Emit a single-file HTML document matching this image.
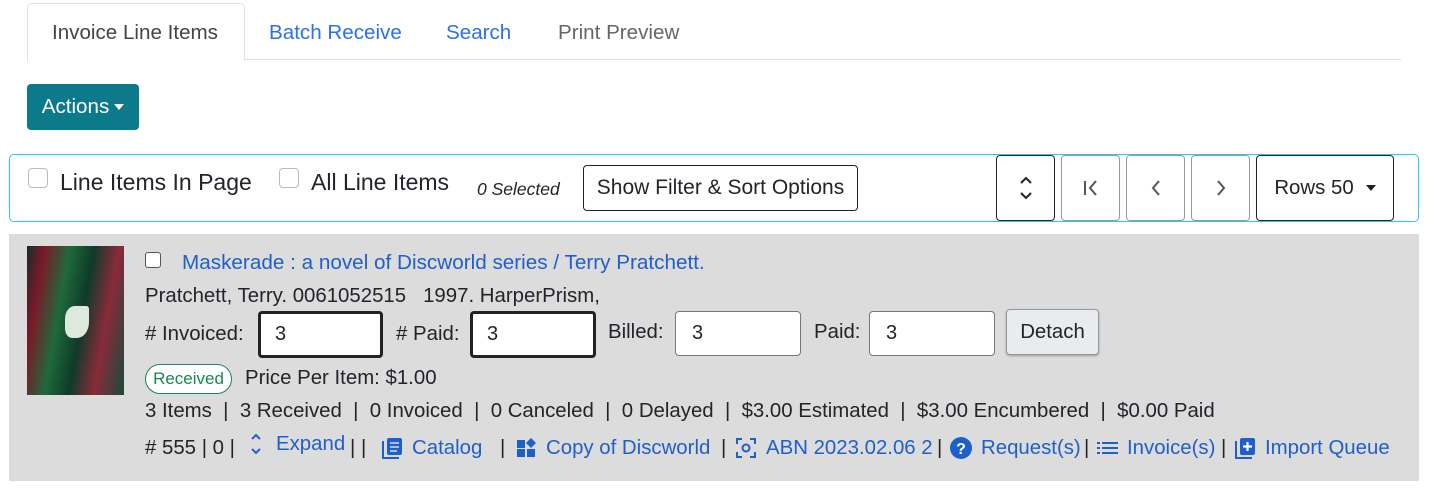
<!DOCTYPE html>
<html><head><meta charset="utf-8"><style>
*{box-sizing:border-box;margin:0;padding:0}
body{width:1434px;height:494px;background:#fff;font-family:"Liberation Sans",sans-serif;color:#212529;position:relative;overflow:hidden;font-size:20.4px}
.a{position:absolute;white-space:nowrap}
.lnk{color:#1f5fc9}
.cb{position:absolute;width:20px;height:20px;border:1px solid #bbb;border-radius:4px;background:#fff}
.btn{position:absolute;border:1px solid #222;border-radius:4px;background:#fff;display:flex;align-items:center;justify-content:center}
.in{position:absolute;background:#fff;border:1px solid #777;border-radius:4px;padding-left:16px;display:flex;align-items:center;font-size:20px}
.thick{border:3px solid #222;padding-left:14px}
svg{display:block}
</style></head><body>
<div class="a" style="left:27px;top:3px;width:218px;height:58px;border:1px solid #dee2e6;border-bottom:none;border-radius:5px 5px 0 0;background:#fff"></div>
<div class="a" style="left:244px;top:59px;width:1157px;height:1px;background:#dee2e6"></div>
<div class="a" style="left:52px;top:21px;color:#444;font-size:20.6px">Invoice Line Items</div>
<div class="a" style="left:269px;top:21px;color:#2c6ff0;font-size:20.6px">Batch Receive</div>
<div class="a" style="left:446px;top:21px;color:#2c6ff0;font-size:20.6px">Search</div>
<div class="a" style="left:558px;top:21px;color:#666;font-size:20.6px">Print Preview</div>
<div class="a" style="left:27px;top:84px;width:112px;height:46px;background:#0d7a8c;border-radius:4px;color:#fff;display:flex;align-items:center;justify-content:center;font-size:20.6px">Actions<span style="display:inline-block;margin-left:5px;border-left:5px solid transparent;border-right:5px solid transparent;border-top:6px solid #fff"></span></div>
<div class="a" style="left:9px;top:154px;width:1410px;height:68px;border:1px solid #2cc7e3;border-radius:5px"></div>
<div class="cb" style="left:28px;top:168px"></div>
<div class="a" style="left:60px;top:169px;font-size:23px">Line Items In Page</div>
<div class="cb" style="left:279px;top:168px"></div>
<div class="a" style="left:311px;top:169px;font-size:23px">All Line Items</div>
<div class="a" style="left:477px;top:179px;font-size:17.5px;font-style:italic">0 Selected</div>
<div class="btn" style="left:583px;top:165px;width:275px;height:46px;font-size:21px">Show Filter &amp; Sort Options</div>
<div class="btn" style="left:996px;top:155px;width:59px;height:66px"><svg width="14" height="26" viewBox="0 0 14 26"><path d="M2 8 L7 3 L12 8 M2 18 L7 23 L12 18" fill="none" stroke="#222" stroke-width="2"/></svg></div>
<div class="btn" style="left:1061px;top:155px;width:59px;height:66px;border-color:#999"><svg width="20" height="20" viewBox="0 0 20 20"><path d="M4 3 V17 M15 3 L9 10 L15 17" fill="none" stroke="#555" stroke-width="2"/></svg></div>
<div class="btn" style="left:1126px;top:155px;width:59px;height:66px;border-color:#999"><svg width="12" height="20" viewBox="0 0 12 20"><path d="M9 3 L3 10 L9 17" fill="none" stroke="#555" stroke-width="2"/></svg></div>
<div class="btn" style="left:1191px;top:155px;width:59px;height:66px;border-color:#999"><svg width="12" height="20" viewBox="0 0 12 20"><path d="M3 3 L9 10 L3 17" fill="none" stroke="#555" stroke-width="2"/></svg></div>
<div class="btn" style="left:1256px;top:155px;width:138px;height:66px">Rows 50<span style="display:inline-block;margin-left:12px;border-left:5px solid transparent;border-right:5px solid transparent;border-top:6px solid #222"></span></div>
<div class="a" style="left:9px;top:234px;width:1410px;height:247px;background:#dcdcdc"></div>
<div class="a" style="left:27px;top:246px;width:97px;height:149px;background:linear-gradient(100deg,#1a2a2a 0%,#7a1a2a 15%,#1e6a3a 35%,#0f3a2a 55%,#8a2a3a 75%,#1a4a3a 100%)"><div style="position:absolute;left:38px;top:60px;width:24px;height:32px;background:#dfe8dc;border-radius:40% 10% 50% 30%"></div></div>
<div class="a" style="left:145px;top:252px;width:16px;height:16px;border:1px solid #555;border-radius:3px;background:#fff"></div>
<div class="a lnk" style="left:182px;top:251px;font-size:20.7px">Maskerade : a novel of Discworld series / Terry Pratchett.</div>
<div class="a" style="left:145px;top:285px">Pratchett, Terry. 0061052515&nbsp;&nbsp;&nbsp;1997. HarperPrism,</div>
<div class="a" style="left:145px;top:323px">#&nbsp;Invoiced:</div>
<div class="in thick" style="left:258px;top:311px;width:125px;height:47px">3</div>
<div class="a" style="left:396px;top:323px">#&nbsp;Paid:</div>
<div class="in thick" style="left:470px;top:311px;width:126px;height:47px">3</div>
<div class="a" style="left:608px;top:321px">Billed:</div>
<div class="in" style="left:675px;top:311px;width:126px;height:45px">3</div>
<div class="a" style="left:814px;top:321px">Paid:</div>
<div class="in" style="left:869px;top:311px;width:126px;height:45px">3</div>
<div class="a" style="left:1006px;top:309px;width:93px;height:46px;background:#e9ecef;border:1px solid #999;border-radius:4px;display:flex;align-items:center;justify-content:center;box-shadow:0 1px 2px rgba(0,0,0,.3)">Detach</div>
<div class="a" style="left:145px;top:364px;width:87px;height:30px;border:1px solid #198754;border-radius:15px;color:#198754;font-size:17px;display:flex;align-items:center;justify-content:center;background:#fff">Received</div>
<div class="a" style="left:245px;top:367px">Price Per Item: $1.00</div>
<div class="a" style="left:145px;top:400px">3 Items&nbsp; |&nbsp; 3 Received&nbsp; |&nbsp; 0 Invoiced&nbsp; |&nbsp; 0 Canceled&nbsp; |&nbsp; 0 Delayed&nbsp; |&nbsp; $3.00 Estimated&nbsp; |&nbsp; $3.00 Encumbered&nbsp; |&nbsp; $0.00 Paid</div>
<div class="a" style="left:145px;top:437px"># 555 | 0 |</div>
<div class="a" style="left:249px;top:433px"><svg width="14" height="22" viewBox="0 0 14 22"><path d="M3 6 L7 2 L11 6 M3 16 L7 20 L11 16" fill="none" stroke="#1f5fc9" stroke-width="2"/></svg></div>
<div class="a lnk" style="left:276px;top:433px">Expand</div>
<div class="a" style="left:350px;top:437px">| |</div>
<div class="a" style="left:381px;top:437px"><svg width="22" height="22" viewBox="0 0 22 22"><path d="M2 4 V21 H18" fill="none" stroke="#1f5fc9" stroke-width="2"/><rect x="6" y="1" width="15" height="17" rx="2" fill="#1f5fc9"/><path d="M9 6 H18 M9 10 H18 M9 14 H16" stroke="#dcdcdc" stroke-width="1.6"/></svg></div>
<div class="a lnk" style="left:412px;top:437px">Catalog</div>
<div class="a" style="left:500px;top:437px">|</div>
<div class="a" style="left:516px;top:437px"><svg width="22" height="22" viewBox="0 0 22 22" fill="#1f5fc9"><rect x="1" y="3" width="8" height="8"/><rect x="1" y="12" width="8" height="8"/><rect x="11" y="12" width="8" height="8"/><path d="M15 1 L20 6 L15 11 L10 6Z"/></svg></div>
<div class="a lnk" style="left:546px;top:437px">Copy of Discworld</div>
<div class="a" style="left:721px;top:437px">|</div>
<div class="a" style="left:735px;top:437px"><svg width="22" height="22" viewBox="0 0 22 22" fill="none" stroke="#1f5fc9" stroke-width="2"><path d="M2 7 V2 H7 M15 2 H20 V7 M20 15 V20 H15 M7 20 H2 V15"/><circle cx="11" cy="11" r="3.5"/></svg></div>
<div class="a lnk" style="left:766px;top:437px">ABN 2023.02.06 2</div>
<div class="a" style="left:937px;top:437px">|</div>
<div class="a" style="left:950px;top:437px"><svg width="22" height="22" viewBox="0 0 22 22"><circle cx="11" cy="11" r="11" fill="#1f5fc9"/><text x="11" y="17" font-size="16" font-weight="bold" fill="#fff" text-anchor="middle" font-family="Liberation Sans">?</text></svg></div>
<div class="a lnk" style="left:981px;top:437px">Request(s)</div>
<div class="a" style="left:1084px;top:437px">|</div>
<div class="a" style="left:1097px;top:440px"><svg width="22" height="16" viewBox="0 0 22 16" fill="#1f5fc9"><rect x="0" y="2" width="3" height="2"/><rect x="5" y="2" width="16" height="2"/><rect x="0" y="7" width="3" height="2"/><rect x="5" y="7" width="16" height="2"/><rect x="0" y="12" width="3" height="2"/><rect x="5" y="12" width="16" height="2"/></svg></div>
<div class="a lnk" style="left:1127px;top:437px">Invoice(s)</div>
<div class="a" style="left:1221px;top:437px">|</div>
<div class="a" style="left:1234px;top:437px"><svg width="22" height="22" viewBox="0 0 22 22"><path d="M2 4 V21 H18" fill="none" stroke="#1f5fc9" stroke-width="2"/><rect x="6" y="1" width="15" height="17" rx="2" fill="#1f5fc9"/><path d="M13.5 5 V14 M9 9.5 H18" stroke="#fff" stroke-width="2.2"/></svg></div>
<div class="a lnk" style="left:1265px;top:437px">Import Queue</div>
</body></html>
